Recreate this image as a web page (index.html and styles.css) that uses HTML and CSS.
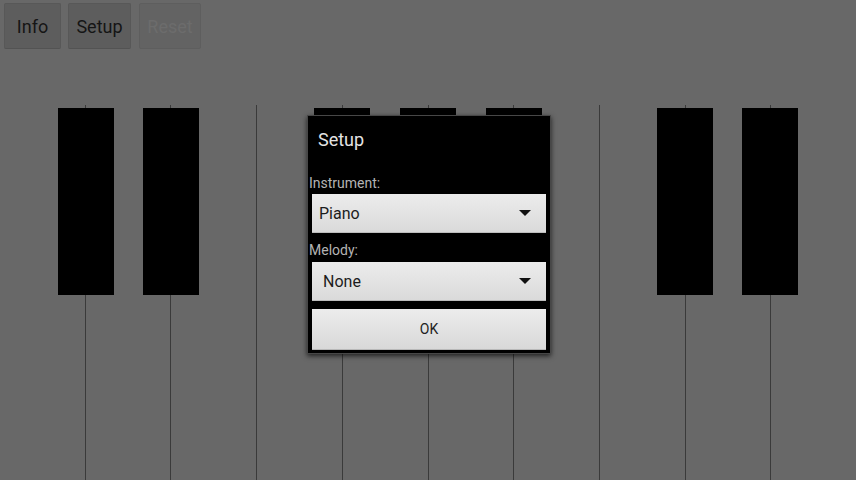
FILE: index.html
```html
<!DOCTYPE html>
<html lang="en">
<head>
    <meta charset="UTF-8">
    <meta name="viewport" content="width=device-width, initial-scale=1.0">
    <title>Piano</title>
    <link rel="stylesheet" href="styles.css">
</head>
<body>
    <div class="toolbar">
        <button class="btn btn-info">Info</button>
        <button class="btn btn-setup">Setup</button>
        <button class="btn btn-reset" disabled>Reset</button>
    </div>

    <div class="piano">
        <div class="white-keys">
            <div class="white-key"></div>
            <div class="white-key"></div>
            <div class="white-key"></div>
            <div class="white-key"></div>
            <div class="white-key"></div>
            <div class="white-key"></div>
            <div class="white-key"></div>
            <div class="white-key"></div>
            <div class="white-key"></div>
            <div class="white-key"></div>
        </div>
        <!-- black keys sit over the white ones, centred on the key boundaries -->
        <div class="black-key k1"></div>
        <div class="black-key k2"></div>
        <div class="black-key k4"></div>
        <div class="black-key k5"></div>
        <div class="black-key k6"></div>
        <div class="black-key k8"></div>
        <div class="black-key k9"></div>
    </div>

    <div class="dialog">
        <div class="dialog-title">Setup</div>
        <div class="field-label first">Instrument:</div>
        <div class="spinner">
            <span class="spinner-text">Piano</span>
            <span class="spinner-arrow"></span>
        </div>
        <div class="field-label">Melody:</div>
        <div class="spinner">
            <span class="spinner-text wide">None</span>
            <span class="spinner-arrow"></span>
        </div>
        <button class="ok-btn">OK</button>
    </div>
</body>
</html>
```

FILE: styles.css
```css
html, body {
    margin: 0;
    padding: 0;
}
body {
    width: 856px;
    height: 480px;
    overflow: hidden;
    position: relative;
    background: #686868;
    font-family: Roboto, "Noto Sans", sans-serif;
    display: flex;
    flex-direction: column;
}

.toolbar {
    display: flex;
    gap: 7px;
    padding: 3px 0 0 4px;
    height: 105px;
    flex: none;
    box-sizing: border-box;
}
.btn {
    height: 46px;
    background: #5d5d5d;
    border: 1px solid #585858;
    border-bottom-color: #535353;
    border-radius: 2px;
    font-family: Roboto, "Noto Sans", sans-serif;
    font-size: 18px;
    color: #151515;
    padding: 0;
}
.btn-info { width: 57px; }
.btn-setup { width: 63px; margin-right: 1px; }
.btn-reset { width: 62px; color: #6c6c6c; background: #636363; border-color: #5e5e5e; }

.piano {
    position: relative;
    flex: 1;
}
.white-keys {
    display: flex;
    height: 100%;
}
.white-key {
    flex: 1;
    border-right: 1px solid #3a3a3a;
    background: #686868;
}
.white-key:last-child { border-right: none; }

.black-key {
    position: absolute;
    top: 3px;
    width: 56px;
    height: 187px;
    background: #000;
}
.k1 { left: calc(10% - 28px); }
.k2 { left: calc(20% - 28px); }
.k4 { left: calc(40% - 28px); }
.k5 { left: calc(50% - 28px); }
.k6 { left: calc(60% - 28px); }
.k8 { left: calc(80% - 28px); }
.k9 { left: calc(90% - 28px); }

.dialog {
    position: absolute;
    left: 307px;
    top: 115px;
    width: 242px;
    background: #000;
    border: 1px solid #474747;
    box-shadow: 0 2px 5px rgba(0,0,0,0.7);
    padding-bottom: 3px;
    display: flex;
    flex-direction: column;
}
.dialog-title {
    height: 48px;
    line-height: 48px;
    padding-left: 10px;
    font-size: 18px;
    color: #e4e4e4;
}
.field-label {
    padding: 8px 0 3px 1px;
    line-height: 18px;
    font-size: 14px;
    color: #b4b4b4;
}
.field-label.first {
    padding-top: 10px;
    padding-bottom: 2px;
}
.spinner {
    margin: 0 4px;
    height: 39px;
    box-sizing: border-box;
    background: linear-gradient(#ececec, #dadada);
    border-bottom: 1px solid #bcbcbc;
    display: flex;
    align-items: center;
    justify-content: space-between;
    padding: 0 15px 0 7px;
}
.spinner-text {
    font-size: 16px;
    color: #1c1c1c;
}
.spinner-text.wide { padding-left: 4px; }
.spinner-arrow {
    width: 0;
    height: 0;
    border-left: 6px solid transparent;
    border-right: 6px solid transparent;
    border-top: 6px solid #111;
}
.ok-btn {
    margin: 8px 4px 0;
    height: 41px;
    background: linear-gradient(#ececec, #d8d8d8);
    border: none;
    border-bottom: 1px solid #b8b8b8;
    font-family: Roboto, "Noto Sans", sans-serif;
    font-size: 14px;
    color: #222;
    padding: 0;
}
```
